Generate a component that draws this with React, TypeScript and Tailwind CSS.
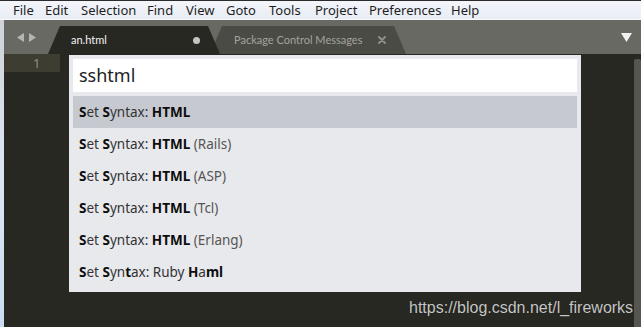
import React from "react";

const menuItems = [
  { label: "File", w: "w-[32px]" },
  { label: "Edit", w: "w-[36px]" },
  { label: "Selection", w: "w-[66px]" },
  { label: "Find", w: "w-[39px]" },
  { label: "View", w: "w-[40px]" },
  { label: "Goto", w: "w-[43px]" },
  { label: "Tools", w: "w-[46px]" },
  { label: "Project", w: "w-[54px]" },
  { label: "Preferences", w: "w-[82px]" },
  { label: "Help", w: "w-[40px]" },
];

type Part = { t: string; b?: boolean; dim?: boolean };

const results: Part[][] = [
  [{ t: "S", b: true }, { t: "et " }, { t: "S", b: true }, { t: "yntax: " }, { t: "HTML", b: true }],
  [{ t: "S", b: true }, { t: "et " }, { t: "S", b: true }, { t: "yntax: " }, { t: "HTML", b: true }, { t: " (Rails)", dim: true }],
  [{ t: "S", b: true }, { t: "et " }, { t: "S", b: true }, { t: "yntax: " }, { t: "HTML", b: true }, { t: " (ASP)", dim: true }],
  [{ t: "S", b: true }, { t: "et " }, { t: "S", b: true }, { t: "yntax: " }, { t: "HTML", b: true }, { t: " (Tcl)", dim: true }],
  [{ t: "S", b: true }, { t: "et " }, { t: "S", b: true }, { t: "yntax: " }, { t: "HTML", b: true }, { t: " (Erlang)", dim: true }],
  [
    { t: "S", b: true },
    { t: "et " },
    { t: "S", b: true },
    { t: "yn" },
    { t: "t", b: true },
    { t: "ax: Ruby " },
    { t: "H", b: true },
    { t: "a" },
    { t: "ml", b: true },
  ],
];

export default function App() {
  return (
    <div className="relative w-[641px] h-[327px] overflow-hidden bg-[#272822] font-['Noto_Sans',sans-serif] flex flex-col">
      {/* menu bar */}
      <div className="h-[20px] shrink-0 border-t border-[#2b2b2b] border-b border-b-[#f8f9fb] bg-gradient-to-b from-[#f3f5fa] to-[#e8ecf4] flex items-center pl-[13px] text-[13px] text-[#1e1e1e] leading-none">
        {menuItems.map((m) => (
          <div key={m.label} className={m.w}>
            {m.label}
          </div>
        ))}
      </div>

      <div className="flex flex-1 min-h-0">
        {/* window border strip */}
        <div className="w-[4px] shrink-0 bg-gradient-to-b from-[#cfd3d8] via-[#dbe6f3] to-[#c9dcf0]" />

        <div className="flex-1 flex flex-col min-w-0">
          {/* tab bar */}
          <div className="h-[34px] shrink-0 bg-[#686963] flex items-end relative font-['Lato',sans-serif]">
            <div className="w-[44px] h-full flex items-center pl-[13px] gap-[5px]">
              <svg width="7" height="9" viewBox="0 0 7 9">
                <path d="M7 0 L0 4.5 L7 9 Z" fill="#b4b5b0" />
              </svg>
              <svg width="7" height="9" viewBox="0 0 7 9">
                <path d="M0 0 L7 4.5 L0 9 Z" fill="#b4b5b0" />
              </svg>
            </div>
            <div className="relative z-10 w-[172px] h-[28px] bg-[#272822] [clip-path:polygon(12px_0,calc(100%-12px)_0,100%_100%,0_100%)] flex items-center pl-[23px] pr-[20px] text-[11px] text-[#f4f4f4] whitespace-nowrap">
              <span className="flex-1">an.html</span>
              <span className="w-[7px] h-[7px] rounded-full bg-[#c4c4c2]" />
            </div>
            <div className="ml-[-10px] w-[196px] h-[28px] bg-[#4a4b45] [clip-path:polygon(12px_0,calc(100%-12px)_0,100%_100%,0_100%)] flex items-center pl-[24px] pr-[20px] text-[11px] text-[#a3a49e] whitespace-nowrap">
              <span className="flex-1">Package Control Messages</span>
              <svg width="8" height="8" viewBox="0 0 8 8">
                <path d="M1 1 L7 7 M7 1 L1 7" stroke="#8e8f89" strokeWidth="2" strokeLinecap="round" />
              </svg>
            </div>
            <svg className="absolute right-[9px] top-[13px]" width="11" height="9" viewBox="0 0 11 9">
              <path d="M0 0 H11 L5.5 9 Z" fill="#f2f2f2" />
            </svg>
          </div>

          {/* editor */}
          <div className="flex-1 flex min-h-0">
            <div className="w-[56px] shrink-0">
              <div className="h-[18px] bg-[#3e3d32] text-[13px] text-[#8f908a] flex items-center pl-[29px] leading-none">
                1
              </div>
            </div>
            <div className="flex-1" />
            <div className="w-[7px] shrink-0 pt-[5px] flex">
              <div className="flex-1 rounded-t-[2px] bg-[#55564f]" />
            </div>
          </div>
        </div>
      </div>

      {/* command palette */}
      <div className="absolute left-[69px] top-[55px] w-[512px] bg-[#e8e9ec] p-[4px] flex flex-col">
        <div className="h-[33px] bg-white flex items-center pl-[6px] text-[18px] text-[#222222]">sshtml</div>
        <div className="mt-[4px] flex flex-col">
          {results.map((parts, i) => (
            <div
              key={i}
              className={`h-[32px] flex items-center pl-[6px] text-[13.5px] text-[#333333] ${i === 0 ? "bg-[#c6c9d0]" : ""}`}
            >
              {parts.map((p, j) => (
                <span
                  key={j}
                  className={`whitespace-pre ${p.b ? "font-bold text-[#0d0d0d]" : ""} ${p.dim ? "text-[#555555]" : ""}`}
                >
                  {p.t}
                </span>
              ))}
            </div>
          ))}
        </div>
      </div>

      {/* watermark */}
      <div className="absolute left-[409px] top-[296px] text-[16px] text-[#c6c6c6] font-['Liberation_Sans',sans-serif] [text-shadow:0_0_1px_rgba(0,0,0,0.6)]">
        https://blog.csdn.net/l_fireworks
      </div>
    </div>
  );
}
